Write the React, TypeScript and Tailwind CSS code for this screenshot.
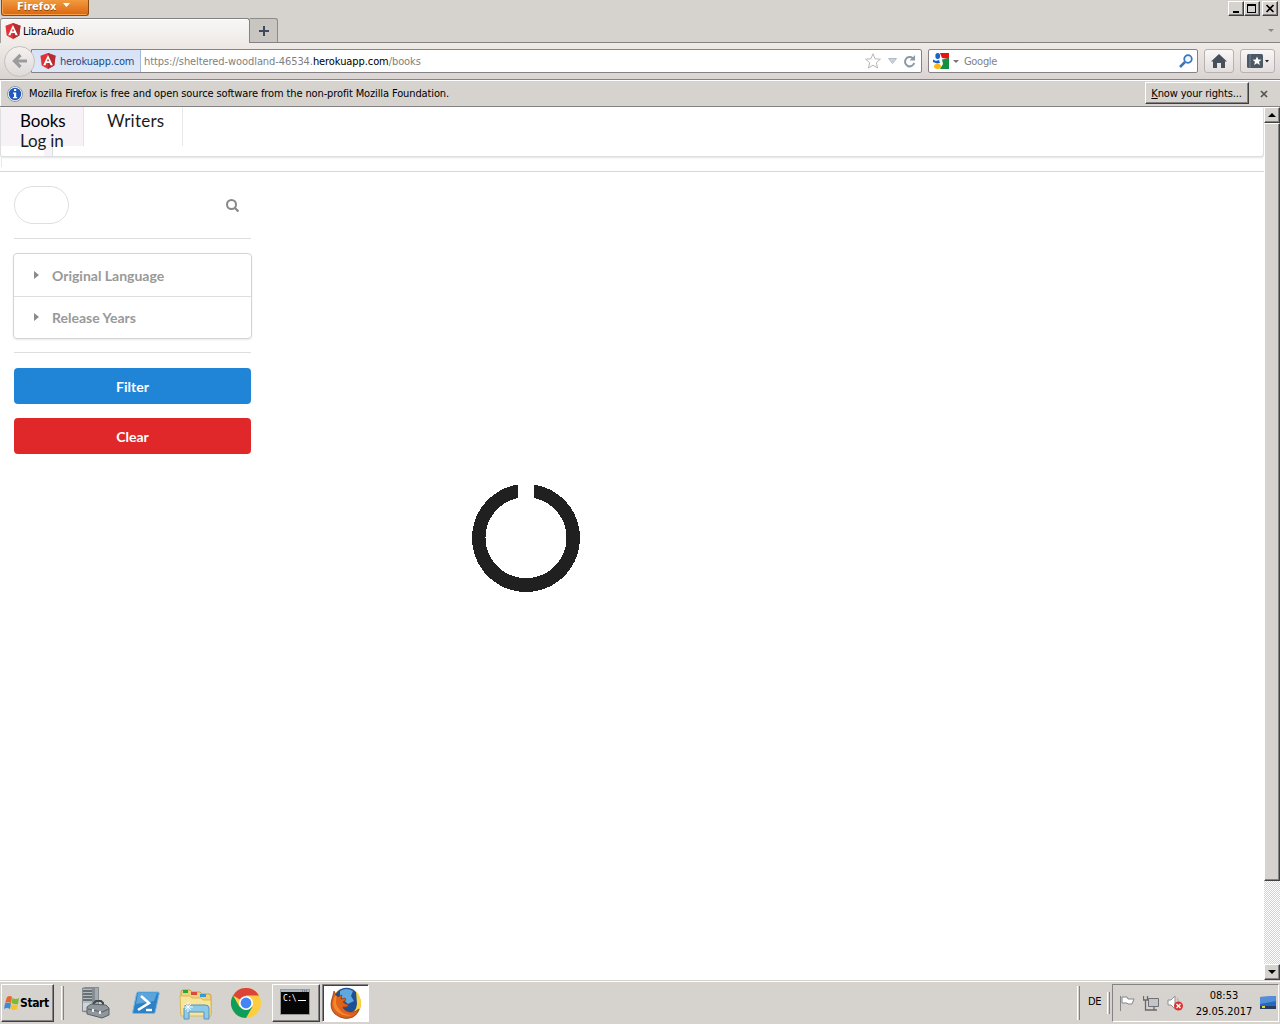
import type { ReactNode } from "react";

const tahoma = "font-['DejaVu_Sans_Condensed','DejaVu_Sans',sans-serif] [font-stretch:condensed]";
const raised =
  "border border-t-white border-l-white border-r-[#404040] border-b-[#404040] bg-[#d6d3ce] shadow-[inset_-1px_-1px_0_#848284]";

function Angular({ className }: { className: string }) {
  return (
    <svg viewBox="0 0 16 16" className={className}>
      <path d="M8 0 15.5 2.7 14.3 12.4 8 16 1.7 12.4.5 2.7Z" fill="#e23237" />
      <path d="M8 0 15.5 2.7 14.3 12.4 8 16Z" fill="#b52e31" />
      <path d="M8 2 3.200 12.300h2.300l.9-2.200h3.200l.9 2.200h2.300Zm0 3.600 1.100 2.700H6.900Z" fill="#fff" />
    </svg>
  );
}

function TitleBar() {
  return (
    <div className="flex h-[18px] items-start justify-between pr-[2px]">
      <div className="ml-px flex h-4 w-[88px] items-start rounded-b-[3px] border border-t-0 border-[#8b4a13] bg-gradient-to-b from-[#f09a3e] to-[#dc6508] pl-[15px] text-white shadow-[inset_1px_-1px_0_#f3a04e]">
        <span className="h-3 w-[40px] whitespace-nowrap pt-px font-['DejaVu_Sans_Condensed'] text-[11px] font-bold leading-3 tracking-[0.02px] [text-shadow:0_1px_0_#8b4a13]">Firefox</span>
        <svg viewBox="0 0 7 4" className="ml-[6px] mt-[3px] h-1 w-[7px]"><path d="M0 0h7L3.500 4Z" fill="#fff" /></svg>
      </div>
      <div className="mt-px flex">
        <div className={`${raised} h-[15px] w-4`}>
          <svg viewBox="0 0 14 13" className="h-[13px] w-[14px]"><path d="M4 9h6v2H4z" /></svg>
        </div>
        <div className={`${raised} h-[15px] w-4`}>
          <svg viewBox="0 0 14 13" className="h-[13px] w-[14px]"><path d="M2 2h9v9H2zM3 4v6h7V4z" fillRule="evenodd" shapeRendering="crispEdges" /></svg>
        </div>
        <div className={`${raised} ml-[2px] h-[15px] w-4`}>
          <svg viewBox="0 0 14 13" className="h-[13px] w-[14px]"><path d="m3.500 3 7 7m0-7-7 7" stroke="#000" strokeWidth="1.700" /></svg>
        </div>
      </div>
    </div>
  );
}

function TabStrip() {
  return (
    <div className="flex h-[25px] items-end border-b border-[#848284]">
      <div className="-mb-px flex h-[25px] w-[250px] items-center rounded-t-[3px] border border-b-0 border-[#848284] border-l-[#a09e9a] bg-gradient-to-b from-[#f8f7f6] to-[#efebe7] pl-1 text-[11px] shadow-[inset_0_1px_0_#fff]">
        <Angular className="h-4 w-4" />
        <span className="ml-[2px] mt-[3px] whitespace-nowrap tracking-[-0.2px]">LibraAudio</span>
      </div>
      <div className="flex h-6 w-7 items-center justify-center rounded-tr-[3px] border border-b-0 border-l-0 border-[#8d8b88] bg-[#c9c6c1]">
        <svg viewBox="0 0 10 10" className="h-[10px] w-[10px]"><path d="M4 0h2v4h4v2H6v4H4V6H0V4h4z" fill="#3c4b5b" /></svg>
      </div>
      <svg viewBox="0 0 6 3" className="mb-[10px] ml-auto mr-[6px] h-[3px] w-[6px]"><path d="M0 0h6L3 3Z" fill="#8a8886" /></svg>
    </div>
  );
}

function ToolButton({ className, children }: { className: string; children: ReactNode }) {
  return (
    <div className={`flex h-6 items-center justify-center rounded-[3px] border border-[#b8b1b2] bg-gradient-to-b from-[#faf7f7] to-[#e3dddd] ${className}`}>
      {children}
    </div>
  );
}

function NavBar() {
  return (
    <div className="flex h-[37px] items-center border-b border-[#848284] bg-gradient-to-b from-[#f1ebe8] to-[#d9d4d2] px-1">
      <div className="z-10 flex h-[31px] w-[31px] shrink-0 items-center justify-center rounded-full border border-[#c4c0be] bg-gradient-to-b from-[#f4f1ef] to-[#dedada]">
        <svg viewBox="0 0 16 16" className="h-4 w-4"><path d="M8.500 2 2.500 8l6 6M3 8h12" fill="none" stroke="#9b9b9c" strokeWidth="3.200" /></svg>
      </div>
      <div className="-ml-1 flex h-6 w-[891px] items-center rounded-r-[2px] border border-[#848284] bg-white text-[11px]">
        <div className="flex h-[22px] w-[109px] shrink-0 items-center border-r border-[#a5b9da] bg-gradient-to-b from-[#d7e2f6] to-[#dfe8f8] pl-2 text-[#1c4b84]">
          <Angular className="h-4 w-4" />
          <span className="ml-1 mt-[3px] whitespace-nowrap tracking-[-0.2px]">herokuapp.com</span>
        </div>
        <span className="ml-[3px] mt-[3px] whitespace-nowrap tracking-[-0.08px] text-[#7f7f7f]">https://sheltered-woodland-46534.<span className="text-black">herokuapp.com</span>/books</span>
        <svg viewBox="0 0 16 16" className="ml-auto h-4 w-4"><path d="m8 .8 2.100 5 5.300.400-4.100 3.500 1.300 5.300L8 12.200 3.400 15l1.300-5.300L.6 6.200l5.300-.400Z" fill="#fff" stroke="#b9b5b7" /></svg>
        <svg viewBox="0 0 9 6" className="ml-[7px] h-[6px] w-[9px]"><path d="M.5.500h8l-4 5Z" fill="#ccd2dc" stroke="#b1bac9" /></svg>
        <svg viewBox="0 0 14 14" className="ml-[6px] mr-[5px] h-[13px] w-[13px]"><path d="M10.500 3.500A5 5 0 1 0 12 8.500" fill="none" stroke="#8c99a7" strokeWidth="2.200" /><path d="M13 0v6H7Z" fill="#8c99a7" /></svg>
      </div>
      <div className="ml-[6px] flex h-6 w-[270px] shrink-0 items-center rounded-[2px] border border-[#848284] bg-white pl-1 text-[11px] text-[#7f7f7f]">
        <svg viewBox="0 0 16 16" className="h-4 w-4">
          <path d="M7 0h9v6l-7-1Z" fill="#e8120f" /><path d="M9 6.500 16 5v11H7l3-5Z" fill="#149043" />
          <ellipse cx="4.700" cy="3" rx="2.400" ry="2.900" fill="#1862cc" /><path d="M0 6.500 3 8l3-1 1 3-3 .5L0 9Z" fill="#1862cc" /><ellipse cx="4.500" cy="13.300" rx="3.500" ry="2.600" fill="#fbb912" />
        </svg>
        <svg viewBox="0 0 6 3" className="ml-1 h-[3px] w-[6px]"><path d="M0 0h6L3 3Z" fill="#777" /></svg>
        <span className="ml-[5px] mt-[3px] tracking-[-0.3px]">Google</span>
        <svg viewBox="0 0 14 14" className="ml-auto mr-1 h-[14px] w-[14px]"><circle cx="9" cy="5" r="3.800" fill="#eff6fc" stroke="#3a76ba" strokeWidth="1.700" /><path d="m6 8-5 5" stroke="#3a76ba" strokeWidth="2.500" /></svg>
      </div>
      <ToolButton className="ml-[6px] w-[30px]">
        <svg viewBox="0 0 16 14" className="h-[14px] w-4"><path d="m8 0 8 7.500H14V14H10V9H6v5H2V7.500H0Z" fill="#46505b" /></svg>
      </ToolButton>
      <ToolButton className="ml-[6px] w-[35px]">
        <svg viewBox="0 0 22 14" className="ml-px h-[14px] w-[22px]"><rect width="16" height="14" rx="1.500" fill="#4c5965" /><path d="M3 0v14" stroke="#7b8792" /><path d="m10 2.500 1.300 3 3.200.2-2.500 2 .9 3.200L10 9.200l-2.900 1.700.9-3.200-2.500-2 3.200-.2Z" fill="#fff" /><path d="M18 6h4l-2 2.500Z" fill="#222" /></svg>
      </ToolButton>
    </div>
  );
}

function Notice() {
  return (
    <div className="flex h-[27px] items-center border-b border-[#848284] bg-[#d6d3ce] pl-[7px] text-[11px] shadow-[inset_1px_1px_0_#fff]">
      <svg viewBox="0 0 16 16" className="mt-px h-4 w-4"><circle cx="8" cy="8" r="7.500" fill="#fff" stroke="#8a95a8" /><circle cx="8" cy="8" r="6.200" fill="#2159bd" /><path d="M7 3h2.200v2H7zM6 6.500h3.200V11h1v1.300H6V11h1V7.800H6z" fill="#fff" /></svg>
      <span className="ml-[6px] mt-[2px] whitespace-nowrap tracking-[-0.12px]">Mozilla Firefox is free and open source software from the non-profit Mozilla Foundation.</span>
      <div className={`${raised} ml-auto flex h-[22px] w-[104px] items-center justify-center whitespace-nowrap pr-px pt-[2px] tracking-[-0.16px]`}>
        <span><u>K</u>now your rights...</span>
      </div>
      <svg viewBox="0 0 8 8" className="ml-[11px] mr-3 mt-px h-2 w-2"><path d="m1 1 6 6m0-6L1 7" stroke="#555" strokeWidth="1.700" /></svg>
    </div>
  );
}

function FilterRow({ label }: { label: string }) {
  return (
    <div className="flex h-[41px] items-center pl-5 text-[14px] font-bold text-[#999]">
      <svg viewBox="0 0 5 8" className="mb-px h-2 w-[5px]"><path d="M0 0v8l5-4Z" fill="#8b8b8b" /></svg>
      <span className="ml-[13px] leading-4">{label}</span>
    </div>
  );
}

function Page() {
  return (
    <main className="h-full w-[1264px] bg-white font-['Lato',sans-serif]">
      <nav className="h-[50px] rounded-[3px] border border-t-0 border-[#dededf] text-[17px] leading-5 text-[#1b1b1b] shadow-[0_1px_2px_#22242620]">
        <div className="flex h-[39px]">
          <div className="w-[83px] border-r border-[#e8e3e8] bg-[#f6f2f6] pl-[19px] pt-1 tracking-[-0.15px] text-black">Books</div>
          <div className="w-[99px] border-r border-[#ebe8eb] pl-[23px] pt-1 tracking-[0.25px]">Writers</div>
        </div>
        <div className="-mt-[15px] flex h-[25px] w-[52px] items-end">
          <span className="relative z-10 h-full whitespace-nowrap pl-[19px] tracking-[-0.15px]">Log in</span>
          <span className="-ml-5 h-[9px] w-[9px] shrink-0 border-r border-[#dededf] bg-[#f6f2f6]" />
        </div>
      </nav>
      <div className="ml-px h-[14px]"><div className="h-[10px] border-l border-[#e9e9e9]" /></div>
      <hr className="border-[#d8d8d9]" />
      <aside className="ml-[13px] w-[239px]">
        <div className="mx-px mt-[14px] flex h-[53px] items-start justify-between border-b border-[#dededf] pr-3">
          <div className="h-[38px] w-[55px] rounded-[19px] border border-[#e2dede]" />
          <svg viewBox="0 0 13 13" className="mt-[13px] h-[13px] w-[13px]"><circle cx="5.500" cy="5.500" r="4.500" fill="none" stroke="#888" strokeWidth="2" /><path d="m8.500 8.500 4 4" stroke="#888" strokeWidth="2.200" /></svg>
        </div>
        <div className="mt-[14px] h-[86px] rounded-[4px] border border-[#d4d4d5] pt-px shadow-[0_1px_2px_#22242618]">
          <FilterRow label="Original Language" />
          <div className="border-t border-[#dededf]"><FilterRow label="Release Years" /></div>
        </div>
        <hr className="mx-px mt-[13px] border-[#dededf]" />
        <button className="mx-px mt-[15px] block h-9 w-[237px] rounded-[4px] bg-[#2185d7] pt-[2px] text-[14px] font-bold leading-4 text-white">Filter</button>
        <button className="mx-px mt-[14px] block h-9 w-[237px] rounded-[4px] bg-[#e0282a] pt-[2px] text-[14px] font-bold leading-4 text-white">Clear</button>
      </aside>
      <svg viewBox="0 0 108 108" className="ml-[472px] mt-[30px] h-[108px] w-[108px]" shapeRendering="crispEdges">
        <path d="M46 .6A54 54 0 1 0 62 .6V14A40.500 40.500 0 1 1 46 14Z" fill="#202020" />
      </svg>
    </main>
  );
}

function ScrollBar() {
  return (
    <div className="flex h-full w-4 flex-col bg-[conic-gradient(#fff_25%,#d6d3ce_0_50%,#fff_0_75%,#d6d3ce_0)] bg-[length:2px_2px]">
      <div className={`${raised} flex h-4 shrink-0 items-center justify-center`}><svg viewBox="0 0 8 4" className="h-1 w-2"><path d="M4 0 8 4H0Z" /></svg></div>
      <div className={`${raised} h-[758px] shrink-0`} />
      <div className={`${raised} mt-auto flex h-4 shrink-0 items-center justify-center`}><svg viewBox="0 0 8 4" className="h-1 w-2"><path d="M0 0h8L4 4Z" /></svg></div>
    </div>
  );
}

function ServerIcon() {
  return (
    <svg viewBox="0 0 32 32" className="h-8 w-8">
      <path d="m2 1 3-1h14v24l-5 2-12-1Z" fill="#858d92" /><path d="M3 2h9v22H3Z" fill="#b4babe" /><path d="M3 4h9M3 7h9M3 10h9M3 13h9" stroke="#50585d" strokeWidth="1.500" /><path d="M15 1h3v20h-3z" fill="#a5acb0" /><path d="M3 16h9v7H3Z" fill="#cfd4d6" />
      <path d="M14 19v-3l2-2h5l2 2v3" fill="none" stroke="#41494e" strokeWidth="2" /><path d="m7 20 4-3 15 1 3 3v7l-7 3-15-4Z" fill="#8f979c" stroke="#596166" /><path d="m8 22 14 3 7-3" fill="none" stroke="#596166" /><path d="M12 22h2v3h-2zm7 2h2v3h-2z" fill="#eee" />
    </svg>
  );
}

function PowerShellIcon() {
  return (
    <svg viewBox="0 0 28 24" className="h-6 w-7">
      <path d="M6 1h20q1.500 0 1.200 1.500l-4 18.500q-.4 1.500-2 1.500H2q-1.700 0-1.300-1.500L4.500 2.500Q4.800 1 6 1Z" fill="#2d82c5" stroke="#78b8e3" />
      <path d="M6 2h19l-3 8L4 13Z" fill="#59a5dc" /><path d="m9 5 8 7L6 19" fill="none" stroke="#fff" strokeWidth="2.600" /><path d="M14 19h6" stroke="#fff" strokeWidth="2.400" />
    </svg>
  );
}

function ExplorerIcon() {
  return (
    <svg viewBox="0 0 34 32" className="h-8 w-[34px]">
      <path d="M2 4q0-2 2-2h7l2 2h8l2 2h7q2 0 2 2v18H2Z" fill="#efd27a" stroke="#c7a044" /><path d="M4 2h5v3H4z" fill="#28a63c" /><path d="M12 4h6v3h-6z" fill="#db493c" /><path d="M21 6h6v3h-6z" fill="#3698d5" />
      <path d="M1 8h10l2 2h9l2 2h8v16H2Z" fill="#f8e49a" stroke="#d8b95e" /><path d="M5 31V20q0-3 3-3h18q4 0 4 3v11h-5v-7H10v7Z" fill="#8dcae8" stroke="#5595bb" /><path d="M9 14v10M4 19h10M6 16l6 6m0-6-6 6" stroke="#fff" strokeWidth=".9" />
    </svg>
  );
}

function ChromeIcon() {
  return (
    <svg viewBox="0 0 30 30" className="h-[30px] w-[30px]">
      <circle cx="15" cy="15" r="15" fill="#ffcd40" /><path d="M15 15 2 7.500A15 15 0 0 1 28 7.500H15Z" fill="#db4437" /><path d="M2 7.500A15 15 0 0 0 15 30l6.500-11.300L15 15 8.500 18.700Z" fill="#0f9d58" /><circle cx="15" cy="15" r="7" fill="#fff" /><circle cx="15" cy="15" r="5.400" fill="#4285f4" />
    </svg>
  );
}

function FirefoxIcon() {
  return (
    <svg viewBox="0 0 32 32" className="h-8 w-8">
      <circle cx="16" cy="16.500" r="15" fill="#ef9a1c" /><circle cx="16.500" cy="13.500" r="12.700" fill="#1f4f96" /><path d="M10 4q6-4 13 0l-2 5 3 5-6 3-8-7Z" fill="#5fa9df" />
      <path d="M26 4q7 8 4 17-3 8-12 10 8-5 9-14Z" fill="#fbd743" />
      <path d="M4 4 2 12Q-1 21 5 27q9 7 18 3 5-3 6-8-4 4-9 3-6-1-7-5 4 1 6-2-4-1-6-3l3-2-1-2-4 1 1-4-5 2Z" fill="#df611b" stroke="#7e3a1b" strokeWidth=".7" />
      <path d="M5 9q-5 11 4 17 6 4 13 2-9 0-13-6Q4 16 7 9Z" fill="#f28a2d" />
    </svg>
  );
}

function Separator({ className }: { className: string }) {
  return <div className={`w-[3px] border-l border-r border-l-white border-r-[#848284] bg-[#d6d3ce] ${className}`} />;
}

function Taskbar() {
  return (
    <footer className="flex h-11 items-center border-t border-[#d6d3ce] bg-[#d6d3ce] shadow-[inset_0_1px_0_#fff]">
      <div className={`${raised} ml-px flex h-[38px] w-[53px] items-center pl-px`}>
        <svg viewBox="0 0 16 16" className="h-4 w-4 shrink-0"><path d="M4 2q3-2 5 0L8 8Q5 6 2 8Z" fill="#e9672d" /><path d="M9.500 3q3 2 6.500 0l-1 6q-3 1-6.500-1Z" fill="#7fb934" /><path d="M2 8.500q3-2 6 0L7 14q-3-2-6 0Z" fill="#3c8dcc" /><path d="M8.500 9q3 2 6.500 0l-1 5q-3 2-6.500 0Z" fill="#f6c323" /></svg>
        <span className="ml-px mt-px font-['DejaVu_Sans_Condensed'] text-[12px] font-bold leading-4 tracking-[-0.4px]">Start</span>
      </div>
      <Separator className="ml-[7px] h-[34px]" />
      <div className="ml-4 flex w-[185px] items-center">
        <ServerIcon />
        <div className="ml-[20px]"><PowerShellIcon /></div>
        <div className="ml-[19px] mt-[2px]"><ExplorerIcon /></div>
        <div className="ml-[18px]"><ChromeIcon /></div>
      </div>
      <div className={`${raised} ml-[7px] flex h-[38px] w-12 items-center justify-center pb-px pr-[2px]`}>
        <svg viewBox="0 0 30 26" className="h-[26px] w-[30px]"><rect x=".5" y=".5" width="29" height="25" fill="#050505" stroke="#999" /><path d="M1 1h28v2H1z" fill="#aab5c1" /><path d="M22 2h6" stroke="#42566b" strokeDasharray="1 1" /><text x="3" y="12" fill="#fff" fontFamily="DejaVu Sans Mono" fontSize="8" letterSpacing="-.5">C:\</text><path d="M18 11.500h8" stroke="#fff" /></svg>
      </div>
      <div className="ml-[2px] flex h-[38px] w-[47px] items-center justify-center border border-b-white border-l-[#848284] border-r-white border-t-[#848284] bg-white shadow-[inset_1px_1px_0_#404040]"><FirefoxIcon /></div>
      <Separator className="ml-auto h-[34px]" />
      <span className="ml-2 w-4 pb-px text-[11px] leading-4 tracking-[-0.4px]">DE</span>
      <Separator className="ml-[3px] h-[22px]" />
      <div className="ml-[2px] mr-px flex h-[38px] w-[167px] items-center border border-b-white border-l-[#848284] border-r-white border-t-[#848284] pl-[6px] text-[11px]">
        <svg viewBox="0 0 16 16" className="h-4 w-4 shrink-0"><path d="M1.500 1v15M3 2h5l1 2h6l-2 5H9L8 8H3Z" fill="#fff" stroke="#85858a" /></svg>
        <svg viewBox="0 0 16 16" className="ml-2 h-4 w-4 shrink-0"><path d="M5.500 3.500h10v8h-10z" fill="#c5c5c9" stroke="#707076" /><path d="M.5 1v4h4V1M2.500 5v10H14M11 12v3" fill="none" stroke="#68686d" strokeWidth="1.300" /></svg>
        <svg viewBox="0 0 16 16" className="ml-2 h-4 w-4 shrink-0"><path d="M1 5h3l4-4v13l-4-4H1Z" fill="#fff" stroke="#909095" /><path d="M10 3q2 2 1 5" fill="none" stroke="#aaa" /><circle cx="11.500" cy="11" r="4.500" fill="#df3434" /><path d="m9.500 9 4 4m0-4-4 4" stroke="#fff" strokeWidth="1.400" /></svg>
        <div className="ml-3 mt-[2px] w-[58px] shrink-0 whitespace-nowrap text-center leading-4"><div>08:53</div><div>29.05.2017</div></div>
        <svg viewBox="0 0 16 14" className="ml-[7px] h-[14px] w-4 shrink-0"><path d="M0 1 16 0v11L0 10Z" fill="#2966bd" /><path d="m0 1 16-1v5L0 8Z" fill="#538fd9" /><path d="M0 10h16v3H0z" fill="#283d62" /><path d="M2 10h3v2H2z" fill="#dcda37" /></svg>
      </div>
    </footer>
  );
}

export default function App() {
  return (
    <div className={`flex h-[1024px] w-[1280px] flex-col overflow-hidden bg-[#d6d3ce] text-black ${tahoma}`}>
      <TitleBar />
      <TabStrip />
      <NavBar />
      <Notice />
      <div className="flex h-[873px] shrink-0">
        <Page />
        <ScrollBar />
      </div>
      <Taskbar />
    </div>
  );
}
